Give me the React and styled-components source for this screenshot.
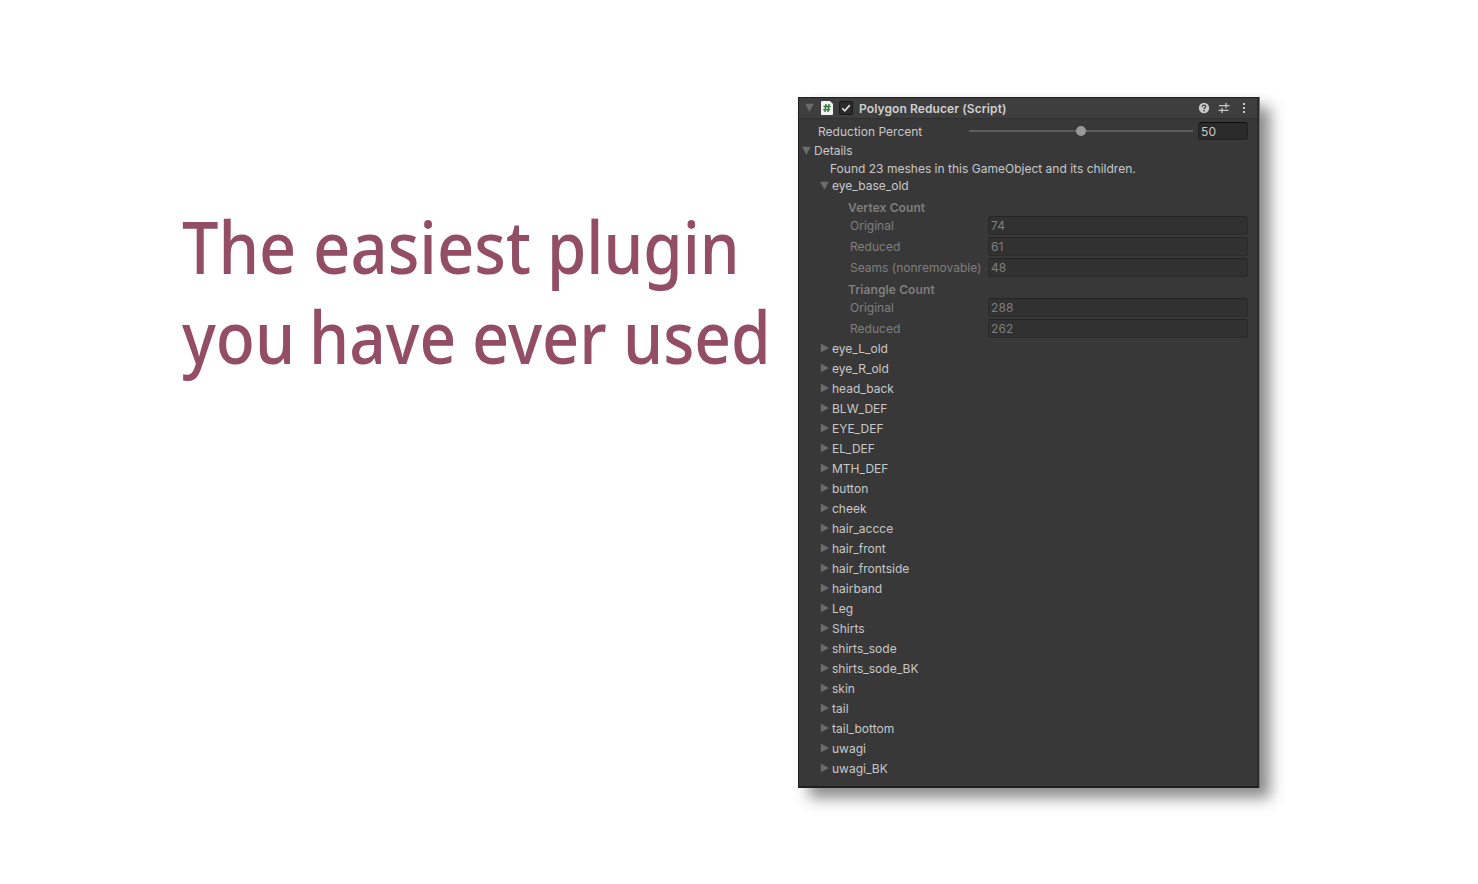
import React from "react";
import styled, { createGlobalStyle } from "styled-components";

const Global = createGlobalStyle`
  * { box-sizing: border-box; }
  body { margin: 0; background: #fff; }
`;
const Page = styled.main`
  width: 1478px;
  height: 884px;
  display: flex;
  align-items: flex-start;
  overflow: hidden;
  background: #fff;
  padding: 97px 0 0 182px;
`;
const Headline = styled.h1`
  width: 616px;
  height: 200px;
  margin: 104px 0 0;
  color: #934d65;
  font: 500 72px/90px "Noto Sans", sans-serif;
  white-space: nowrap;
`;
const Line = styled.span`
  display: flex;
`;
const Word = styled.span`
  width: ${(p) => p.$w}px;
  flex: none;
  transform: scaleX(${(p) => p.$s});
  transform-origin: left;
`;
const Panel = styled.section`
  width: 461px;
  height: 691px;
  flex: none;
  display: flex;
  flex-direction: column;
  background: #383838;
  border: 1px solid #202020;
  border-right: 2px solid #2c2c2c;
  border-bottom: 2px solid #202020;
  box-shadow: 1px 0 0 #747474, 11px 10px 14px rgba(0, 0, 0, 0.46);
  color: #c8c8c8;
  font: 400 12px/20px Inter, sans-serif;
  letter-spacing: 0.01px;
  white-space: nowrap;
`;
const Header = styled.header`
  height: 21px;
  display: flex;
  flex: none;
  align-items: center;
  background: #3e3e3e;
  border-bottom: 1px solid #303030;
  padding: 0 7px 0 6px;
`;
const Title = styled.strong`
  flex: 1;
  margin-left: 6px;
  font-weight: 600;
  letter-spacing: 0.1px;
  color: #d0d0d0;
  line-height: 20px;
  padding-top: 1px;
`;
const IconSlot = styled.span`
  width: 12px;
  height: 14px;
  margin-left: 7px;
  display: flex;
`;
const Check = styled.span`
  width: 14px;
  height: 14px;
  margin-left: 6px;
  display: flex;
  background: #2a2a2a;
  border: 1px solid #191919;
  border-radius: 2px;
`;
const Actions = styled.div`
  display: flex;
  gap: 8px;
`;
const Reduction = styled.div`
  height: 22px;
  margin-top: 1px;
  display: flex;
  align-items: center;
  padding-left: 19px;
`;
const ReductionLabel = styled.label`
  width: 151px;
  padding-top: 2px;
`;
const Track = styled.div`
  width: 224px;
  height: 2px;
  margin-right: 5px;
  background: #5e5e5e;
  display: flex;
  align-items: center;
  justify-content: center;
`;
const Thumb = styled.span`
  width: 10px;
  height: 10px;
  flex: none;
  border-radius: 50%;
  background: #999;
`;
const Field = styled.span`
  width: ${(p) => p.$w}px;
  height: ${(p) => (p.$off ? 19 : 18)}px;
  margin-top: ${(p) => (p.$off ? -1 : 0)}px;
  padding: 0 2px;
  line-height: 18px;
  letter-spacing: 0.1px;
  border: 1px solid ${(p) => (p.$off ? "#2b2b2b" : "#212121")};
  border-top-color: ${(p) => (p.$off ? "#242424" : "#0d0d0d")};
  border-radius: 3px;
  background: ${(p) => (p.$off ? "#313131" : "#2a2a2a")};
`;
const Fold = styled.div`
  height: ${(p) => p.$h || 20}px;
  line-height: ${(p) => p.$h || 20}px;
  display: flex;
  align-items: center;
  gap: 3px;
  padding-left: ${(p) => p.$indent}px;
`;
const Note = styled.p`
  margin: 0 0 0 31px;
  height: 17px;
  line-height: 18px;
`;
const Stats = styled.div`
  height: 145px;
  padding-top: 4px;
`;
const Group = styled.div`
  color: #7f7f7f;
  padding-left: 49px;
`;
const GroupTitle = styled.strong`
  display: block;
  height: 19px;
  line-height: 19px;
  font-weight: 600;
  letter-spacing: 0.1px;
`;
const Stat = styled.div`
  height: 21px;
  display: flex;
  padding-left: 2px;
`;
const StatLabel = styled.span`
  width: 138px;
  line-height: 18px;
`;
const ArrowSvg = styled.svg`
  flex: none;
  overflow: visible;
`;

const Arrow = ({ open }) => (
  <ArrowSvg width="9" height="10" viewBox="0 0 9 10">
    <path d={open ? "M0 .8h8.8L4.4 8.8z" : "M.8 -.4v8.6L9 3.9z"} fill="#6b6b6b" />
  </ArrowSvg>
);

const ScriptIcon = () => (
  <svg width="12" height="14" viewBox="0 0 12 14">
    <path d="M1 0h8l3 3v10a1 1 0 0 1-1 1H1a1 1 0 0 1-1-1V1a1 1 0 0 1 1-1z" fill="#f2f2f2" />
    <path d="M5.1 3L3.9 11M8.1 3L6.9 11M2.6 5.5h7M2.1 8.6h7" stroke="#2a7834" strokeWidth="1.4" fill="none" />
  </svg>
);

const stats = [
  ["Vertex Count", [["Original", 74], ["Reduced", 61], ["Seams (nonremovable)", 48]]],
  ["Triangle Count", [["Original", 288], ["Reduced", 262]]],
];
const meshes = [
  "eye_L_old", "eye_R_old", "head_back", "BLW_DEF", "EYE_DEF", "EL_DEF", "MTH_DEF",
  "button", "cheek", "hair_accce", "hair_front", "hair_frontside", "hairband", "Leg",
  "Shirts", "shirts_sode", "shirts_sode_BK", "skin", "tail", "tail_bottom", "uwagi", "uwagi_BK",
];
const lines = [
  [["The", 131, 0.9], ["easiest", 234, 0.905], ["plugin", 190, 0.882]],
  [["you", 127, 0.89], ["have", 163, 0.89], ["ever", 151, 0.9], ["used", 145, 0.89]],
];

export default function App() {
  return (
    <>
      <Global />
      <Page>
        <Headline>
          {lines.map((words, i) => (
            <Line key={i}>
              {words.map(([t, w, s]) => <Word key={t} $w={w} $s={s}>{t}</Word>)}
            </Line>
          ))}
        </Headline>
        <Panel>
          <Header>
            <Arrow open />
            <IconSlot><ScriptIcon /></IconSlot>
            <Check>
              <svg width="12" height="12" viewBox="0 0 12 12">
                <path d="M2.2 6.2l2.6 2.6 5-5.7" fill="none" stroke="#e0e0e0" strokeWidth="1.6" />
              </svg>
            </Check>
            <Title>Polygon Reducer (Script)</Title>
            <Actions>
              <svg width="12" height="12" viewBox="0 0 12 12">
                <circle cx="6" cy="6" r="5.2" fill="#c8c8c8" />
                <path d="M4.3 4.7c0-2.2 3.4-2.2 3.4-.1C7.7 5.8 6 5.7 6 7.2M6 8.1v1.4" fill="none" stroke="#3c3c3c" strokeWidth="1.3" />
              </svg>
              <svg width="12" height="12" viewBox="0 0 12 12">
                <path d="M1 3.7h7M8 3.7h3.5M8 1v5.3M.5 8.3H4M4 8.3h6.5M4 5.7V11" fill="none" stroke="#c8c8c8" strokeWidth="1.3" />
              </svg>
              <svg width="12" height="12" viewBox="0 0 12 12">
                <path d="M5 1h2v2H5zM5 5h2v2H5zM5 9h2v2H5z" fill="#c8c8c8" />
              </svg>
            </Actions>
          </Header>
          <Reduction>
            <ReductionLabel>Reduction Percent</ReductionLabel>
            <Track><Thumb /></Track>
            <Field $w={50}>50</Field>
          </Reduction>
          <Fold $indent={3} $h={18}><Arrow open />Details</Fold>
          <Note>Found 23 meshes in this GameObject and its children.</Note>
          <Fold $indent={21} $h={17}><Arrow open />eye_base_old</Fold>
          <Stats>
            {stats.map(([title, rows]) => (
              <Group key={title}>
                <GroupTitle>{title}</GroupTitle>
                {rows.map(([label, value]) => (
                  <Stat key={label}>
                    <StatLabel>{label}</StatLabel>
                    <Field $w={260} $off>{value}</Field>
                  </Stat>
                ))}
              </Group>
            ))}
          </Stats>
          {meshes.map((m) => <Fold key={m} $indent={21}><Arrow />{m}</Fold>)}
        </Panel>
      </Page>
    </>
  );
}
